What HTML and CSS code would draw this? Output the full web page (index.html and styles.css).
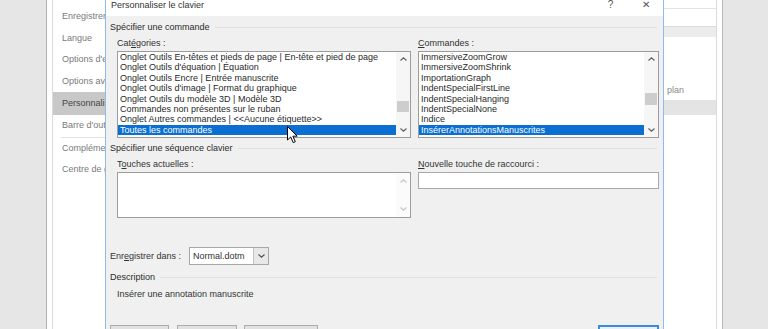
FILE: index.html
```html
<!DOCTYPE html>
<html lang="fr">
<head>
    <meta charset="UTF-8">
    <meta name="viewport" content="width=device-width, initial-scale=1.0">
    <title>Options Word - Personnaliser le clavier</title>
    <link rel="stylesheet" href="styles.css">
</head>
<body>
    <div class="desktop">
        <div class="gutter"></div>

        <!-- Fenêtre Options Word (arrière-plan) -->
        <div class="options">
            <div class="options-inner">
                <div class="options-nav">
                    <div class="nav-item">Enregistrement</div>
                    <div class="nav-item">Langue</div>
                    <div class="nav-item">Options d'ergonomie</div>
                    <div class="nav-item">Options avancées</div>
                    <div class="nav-item active">Personnaliser le ruban</div>
                    <div class="nav-item">Barre d'outils Accès rapide</div>
                    <div class="nav-sep"></div>
                    <div class="nav-item">Compléments</div>
                    <div class="nav-item">Centre de gestion de la confidentialité</div>
                </div>
                <div class="options-main">
                    <div class="main-top"></div>
                    <div class="main-gap"></div>
                    <div class="main-band"></div>
                    <div class="main-row">plan</div>
                    <div class="main-band main-band-sel"></div>
                </div>
            </div>

            <!-- Boîte de dialogue Personnaliser le clavier -->
            <div class="kb-dialog">
                <div class="kb-title">
                    <span class="kb-title-text">Personnaliser le clavier</span>
                    <span class="kb-title-btn kb-help">?</span>
                    <span class="kb-title-btn kb-close">&#x2715;</span>
                </div>
                <div class="kb-body">
                    <div class="group-head"><span>Spécifier une commande</span><i></i></div>
                    <div class="kb-grid">
                        <div class="field-label">Cat<u>é</u>gories :</div>
                        <div class="field-label"><u>C</u>ommandes :</div>

                        <div class="listbox">
                            <div class="list-items">
                                <div class="list-item">Onglet Outils En-têtes et pieds de page | En-tête et pied de page</div>
                                <div class="list-item">Onglet Outils d'équation | Équation</div>
                                <div class="list-item">Onglet Outils Encre | Entrée manuscrite</div>
                                <div class="list-item">Onglet Outils d'image | Format du graphique</div>
                                <div class="list-item">Onglet Outils du modèle 3D | Modèle 3D</div>
                                <div class="list-item">Commandes non présentes sur le ruban</div>
                                <div class="list-item">Onglet Autres commandes | &lt;&lt;Aucune étiquette&gt;&gt;</div>
                                <div class="list-item selected">Toutes les commandes</div>
                            </div>
                            <div class="scrollbar">
                                <div class="sb-btn"><svg width="7" height="4" viewBox="0 0 7 4"><path d="M0.5 3.5 L3.5 0.8 L6.5 3.5" fill="none" stroke="#606060" stroke-width="1.2"/></svg></div>
                                <div class="sb-track"><div class="sb-thumb thumb-cat"></div></div>
                                <div class="sb-btn"><svg width="7" height="4" viewBox="0 0 7 4"><path d="M0.5 0.5 L3.5 3.2 L6.5 0.5" fill="none" stroke="#606060" stroke-width="1.2"/></svg></div>
                            </div>
                        </div>

                        <div class="listbox">
                            <div class="list-items">
                                <div class="list-item">ImmersiveZoomGrow</div>
                                <div class="list-item">ImmersiveZoomShrink</div>
                                <div class="list-item">ImportationGraph</div>
                                <div class="list-item">IndentSpecialFirstLine</div>
                                <div class="list-item">IndentSpecialHanging</div>
                                <div class="list-item">IndentSpecialNone</div>
                                <div class="list-item">Indice</div>
                                <div class="list-item selected">InsérerAnnotationsManuscrites</div>
                            </div>
                            <div class="scrollbar">
                                <div class="sb-btn"><svg width="7" height="4" viewBox="0 0 7 4"><path d="M0.5 3.5 L3.5 0.8 L6.5 3.5" fill="none" stroke="#606060" stroke-width="1.2"/></svg></div>
                                <div class="sb-track"><div class="sb-thumb thumb-cmd"></div></div>
                                <div class="sb-btn"><svg width="7" height="4" viewBox="0 0 7 4"><path d="M0.5 0.5 L3.5 3.2 L6.5 0.5" fill="none" stroke="#606060" stroke-width="1.2"/></svg></div>
                            </div>
                        </div>
                    </div>

                    <div class="group-head second"><span>Spécifier une séquence clavier</span><i></i></div>
                    <div class="kb-grid">
                        <div class="field-label">T<u>o</u>uches actuelles :</div>
                        <div class="field-label"><u>N</u>ouvelle touche de raccourci :</div>

                        <div class="listbox keys-box">
                            <div class="list-items"></div>
                            <div class="scrollbar disabled">
                                <div class="sb-btn"><svg width="7" height="4" viewBox="0 0 7 4"><path d="M0.5 3.5 L3.5 0.8 L6.5 3.5" fill="none" stroke="#c4c4c4" stroke-width="1.2"/></svg></div>
                                <div class="sb-track"></div>
                                <div class="sb-btn"><svg width="7" height="4" viewBox="0 0 7 4"><path d="M0.5 0.5 L3.5 3.2 L6.5 0.5" fill="none" stroke="#c4c4c4" stroke-width="1.2"/></svg></div>
                            </div>
                        </div>
                        <div class="textbox"></div>
                    </div>

                    <div class="save-row">
                        <span class="save-label">Enr<u>e</u>gistrer dans :</span>
                        <div class="combo">
                            <span class="combo-value">Normal.dotm</span>
                            <span class="combo-btn"><svg width="7" height="4" viewBox="0 0 7 4"><path d="M0.5 0.5 L3.5 3.2 L6.5 0.5" fill="none" stroke="#555" stroke-width="1.2"/></svg></span>
                        </div>
                    </div>

                    <div class="group-head third"><span>Description</span><i></i></div>
                    <div class="desc-text">Insérer une annotation manuscrite</div>

                    <!-- les libellés des boutons sont sous le bord de la capture -->
                    <div class="btn-row">
                        <button class="btn btn-a" aria-label="Attribuer"></button>
                        <button class="btn btn-b" aria-label="Supprimer"></button>
                        <button class="btn btn-c" aria-label="Réinitialiser"></button>
                        <span class="spacer"></span>
                        <button class="btn btn-d default" aria-label="Fermer"></button>
                    </div>
                </div>
            </div>

            <!-- Pointeur de la souris -->
            <svg class="cursor" width="12" height="18" viewBox="0 0 12 18">
                <path d="M0.5 0.5 L0.5 14 L3.7 11 L6.2 16.6 L8.3 15.7 L5.9 10.2 L10.2 10.2 Z" fill="#fff" stroke="#000" stroke-width="1"/>
            </svg>
        </div>

        <div class="gutter"></div>
    </div>
</body>
</html>
```

FILE: styles.css
```css
* {
    box-sizing: border-box;
}

body {
    margin: 0;
    background-color: #e6e6e6;
    font-family: "Liberation Sans", Arial, sans-serif;
    color: #2b2b2b;
    overflow: hidden;
}

.desktop {
    display: flex;
    height: 329px;
}

.gutter {
    width: 46px;
    flex-shrink: 0;
}

/* Fenêtre Options Word */
.options {
    position: relative;
    width: 677px;
    flex-shrink: 0;
    display: flex;
    padding: 0 5px;
    background-color: #fff;
    border-left: 1px solid #b0b0b0;
    border-right: 1px solid #b8b8b8;
}

.options-inner {
    flex: 1;
    display: flex;
    border-left: 1px solid #dadada;
    border-right: 1px solid #dadada;
}

.options-nav {
    width: 120px;
    padding-top: 6px;
    overflow: hidden;
}

.nav-item {
    height: 21.5px;
    line-height: 21.5px;
    padding-left: 9px;
    font-size: 9px;
    color: #7a7a7a;
    white-space: nowrap;
}

.nav-item.active {
    height: 23px;
    line-height: 23px;
    background-color: #c8c8c8;
    color: #444;
}

.nav-sep {
    height: 1px;
    margin: 0 4px 0 8px;
    background-color: #e2e2e2;
}

.options-main {
    flex: 1;
    display: flex;
    flex-direction: column;
}

.main-top {
    height: 9px;
    border-bottom: 1px solid #e4e4e4;
}

.main-gap {
    height: 17px;
}

.main-band {
    height: 11px;
    background-color: #ececec;
    border-top: 1px solid #dcdcdc;
}

.main-row {
    height: 63px;
    padding: 48px 0 0 494px;
    font-size: 9px;
    line-height: 11px;
    color: #8a8a8a;
}

.main-band-sel {
    height: 15px;
    border-top: none;
    background-color: #e4e4e4;
}

/* Boîte de dialogue */
.kb-dialog {
    position: absolute;
    left: 58px;
    top: -10px;
    width: 559px;
    height: 360px;
    display: flex;
    flex-direction: column;
    background-color: #f0f0f0;
    border: 1px solid #8fbbe6;
}

.kb-title {
    height: 25px;
    display: flex;
    align-items: flex-start;
    background-color: #fff;
    font-size: 9px;
    line-height: 11px;
}

.kb-title-text {
    padding: 9px 0 0 5px;
    color: #333;
}

.kb-title-btn {
    padding-top: 8px;
    text-align: center;
    color: #555;
    font-size: 10px;
}

.kb-help {
    margin-left: auto;
    width: 37px;
}

.kb-close {
    width: 34px;
}

.kb-body {
    flex: 1;
    padding: 0 4px;
    font-size: 9px;
    line-height: 11px;
}

.group-head {
    display: flex;
    align-items: center;
    margin-top: 6px;
    height: 11px;
}

.group-head i {
    flex: 1;
    height: 1px;
    margin: 0 2px 0 5px;
    background-color: #e0e0e0;
}

.group-head.second {
    margin-top: 5px;
}

.group-head.third {
    margin-top: 7px;
}

.kb-grid {
    display: grid;
    grid-template-columns: 294px 241px;
    column-gap: 7px;
    align-items: start;
    padding-left: 7px;
}

.field-label {
    margin-top: 5px;
    margin-bottom: 2px;
    height: 11px;
    color: #333;
}

.listbox {
    display: flex;
    height: 87px;
    background-color: #fff;
    border: 1px solid #9c9c9c;
}

.list-items {
    flex: 1;
    overflow: hidden;
}

.list-item {
    height: 10.4px;
    line-height: 10.4px;
    padding-left: 2px;
    white-space: nowrap;
    color: #2a2a2a;
}

.list-item.selected {
    background-color: #0a6fd0;
    color: #fff;
}

.scrollbar {
    width: 14px;
    display: flex;
    flex-direction: column;
    background-color: #f6f6f6;
}

.sb-btn {
    height: 14px;
    display: flex;
    align-items: center;
    justify-content: center;
}

.sb-track {
    flex: 1;
}

.sb-thumb {
    margin: 0 1px;
    background-color: #cdcdcd;
}

.thumb-cat {
    margin-top: 35px;
    height: 11px;
}

.thumb-cmd {
    margin-top: 27px;
    height: 12px;
}

.keys-box {
    height: 46px;
}

.scrollbar.disabled {
    background-color: #fbfbfb;
}

.scrollbar.disabled .sb-btn {
    height: 16px;
}

.textbox {
    height: 17px;
    background-color: #fff;
    border: 1px solid #a8a8a8;
}

.save-row {
    display: flex;
    align-items: center;
    margin-top: 29px;
    height: 18px;
}

.save-label {
    width: 79px;
    color: #333;
}

.combo {
    width: 80px;
    height: 18px;
    display: flex;
    background-color: #fff;
    border: 1px solid #a8a8a8;
}

.combo-value {
    flex: 1;
    padding-left: 3px;
    line-height: 16px;
    color: #333;
}

.combo-btn {
    width: 15px;
    display: flex;
    align-items: center;
    justify-content: center;
    background-color: #e8e8e8;
    border-left: 1px solid #c4c4c4;
}

.desc-text {
    margin-top: 6px;
    padding-left: 7px;
    color: #333;
}

.btn-row {
    display: flex;
    margin-top: 25px;
}

.btn {
    height: 22px;
    padding: 0;
    background-color: #e1e1e1;
    border: 1px solid #adadad;
}

.btn-a {
    width: 59px;
}

.btn-b {
    width: 60px;
    margin-left: 8px;
}

.btn-c {
    width: 74px;
    margin-left: 7px;
}

.spacer {
    flex: 1;
}

.btn-d {
    width: 61px;
}

.btn.default {
    background-color: #e5f1fb;
    border: 2px solid #3c8ad8;
}

.cursor {
    position: absolute;
    left: 240px;
    top: 126px;
}
```
